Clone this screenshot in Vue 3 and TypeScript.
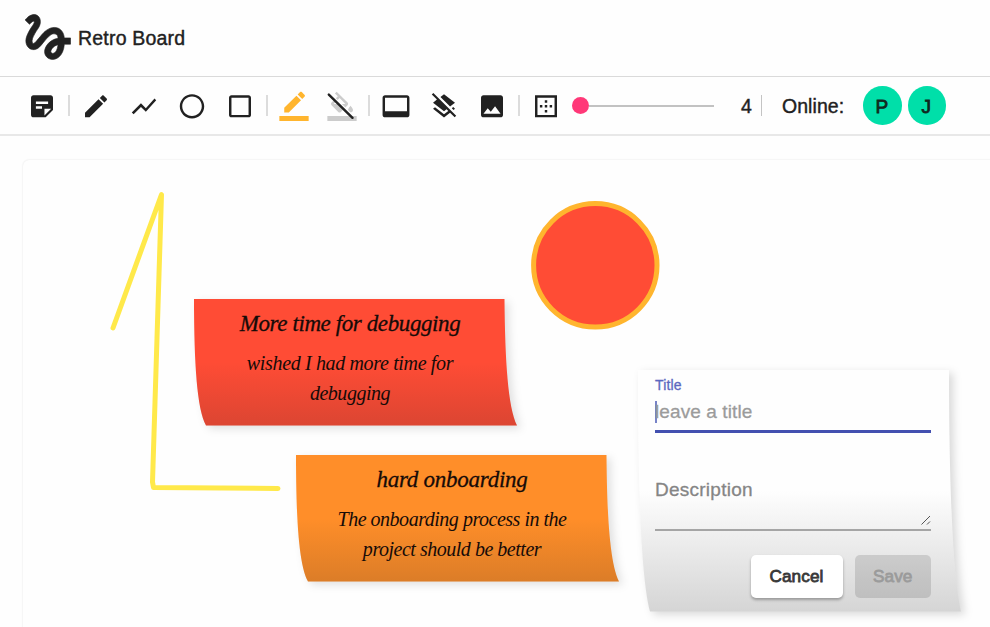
<script setup lang="ts">
import { ref } from 'vue'

interface Tool {
  name: string
  path: string
  kind?: 'stroke-color' | 'fill-color'
}

interface Note {
  id: string
  title: string
  lines: string[]
  color: string
}

const groups: Tool[][] = [
  [
    { name: 'Note', path: 'M19 3H4.99C3.89 3 3 3.9 3 5l.01 14c0 1.1.89 2 1.99 2h10l6-6V5c0-1.1-.9-2-2-2zM7 8h10v2H7V8zm5 6H7v-2h5v2zm2 5.5V14h5.5L14 19.5z' },
  ],
  [
    { name: 'Pencil', path: 'M3 17.25V21h3.75L17.81 9.94l-3.75-3.75L3 17.25zM20.71 7.04c.39-.39.39-1.02 0-1.41l-2.34-2.34c-.39-.39-1.02-.39-1.41 0l-1.83 1.83 3.75 3.75 1.83-1.83z' },
    { name: 'Line', path: 'M3.5 18.49l6-6.01 4 4L22 6.92l-1.41-1.41-7.09 7.97-4-4L2 16.99z' },
    { name: 'Circle', path: 'M12 2C6.48 2 2 6.48 2 12s4.48 10 10 10 10-4.48 10-10S17.52 2 12 2zm0 18c-4.42 0-8-3.58-8-8s3.58-8 8-8 8 3.58 8 8-3.58 8-8 8z' },
    { name: 'Rectangle', path: 'M19 5v14H5V5h14m0-2H5c-1.1 0-2 .9-2 2v14c0 1.1.9 2 2 2h14c1.1 0 2-.9 2-2V5c0-1.1-.9-2-2-2z' },
  ],
  [
    { name: 'Stroke color', kind: 'stroke-color', path: 'M17.75 7L14 3.25l-10 10V17h3.75l10-10zm2.96-2.96c.39-.39.39-1.02 0-1.41L18.37.29c-.39-.39-1.02-.39-1.41 0L15 2.25 18.75 6l1.96-1.96zM0 20h24v4H0z' },
    { name: 'Fill color', kind: 'fill-color', path: 'M16.56 8.94L7.62 0 6.21 1.41l2.38 2.38-5.15 5.15c-.59.59-.59 1.54 0 2.12l5.5 5.5c.29.29.68.44 1.06.44s.77-.15 1.06-.44l5.5-5.5c.59-.58.59-1.53 0-2.12zM5.21 10L10 5.21 14.79 10H5.21zM19 11.5s-2 2.17-2 3.5c0 1.1.9 2 2 2s2-.9 2-2c0-1.33-2-3.5-2-3.5zM0 20h24v4H0z' },
  ],
  [
    { name: 'Background', path: 'M21 3H3c-1.1 0-2 .9-2 2v14c0 1.1.9 2 2 2h18c1.1 0 2-.9 2-2V5c0-1.1-.9-2-2-2zm0 13H3V5h18v11z' },
    { name: 'Clear board', path: 'M19.81 14.99l1.19-.92-1.43-1.43-1.19.92 1.43 1.43zm-.45-4.72L21 9l-9-7-2.91 2.27 7.87 7.88 2.4-1.88zM3.27 1L2 2.27l4.22 4.22L3 9l1.63 1.27L12 16l2.1-1.63 1.43 1.43L12 18.54l-7.37-5.73L3 14.07l9 7 4.95-3.85L20.73 21 22 19.73 3.27 1z' },
    { name: 'Image', path: 'M21 19V5c0-1.1-.9-2-2-2H5c-1.1 0-2 .9-2 2v14c0 1.1.9 2 2 2h14c1.1 0 2-.9 2-2zM8.5 13.5l2.5 3.01L14.5 12l4.5 6H5l3.5-4.5z' },
  ],
  [
    { name: 'Line width', path: 'M13 7h-2v2h2V7zm0 4h-2v2h2v-2zm4 0h-2v2h2v-2zM3 3v18h18V3H3zm16 16H5V5h14v14zm-6-4h-2v2h2v-2zm-4-4H7v2h2v-2z' },
  ],
]

const notes: Note[] = [
  { id: 'debugging', title: 'More time for debugging', lines: ['wished I had more time for', 'debugging'], color: '#ff4c35' },
  { id: 'onboarding', title: 'hard onboarding', lines: ['The onboarding process in the', 'project should be better'], color: '#ff8e29' },
]

const users = ['P', 'J']
const lineWidth = ref(4)
const title = ref('')
const description = ref('')
</script>

<template>
  <div class="app">
    <header class="header">
      <svg class="logo" viewBox="0 0 24 24">
        <path d="M4.59 6.89c.7-.71 1.4-1.35 1.71-1.22.5.2 0 1.03-.3 1.52-.25.42-2.86 3.89-2.86 6.31 0 1.28.48 2.34 1.34 2.98.75.56 1.74.73 2.64.46 1.07-.31 1.95-1.4 3.06-2.77 1.21-1.49 2.83-3.44 4.08-3.44 1.63 0 1.65 1.01 1.76 1.79-3.78.64-5.38 3.67-5.38 5.37 0 1.7 1.44 3.09 3.21 3.09 1.63 0 4.29-1.33 4.69-6.1H21v-2.5h-2.47c-.15-1.65-1.09-4.2-4.03-4.2-2.25 0-4.18 1.91-4.94 2.84-.58.73-2.06 2.48-2.29 2.72-.25.3-.68.84-1.11.84-.45 0-.72-.83-.36-1.92.35-1.09 1.4-2.86 1.85-3.52.78-1.14 1.3-1.92 1.3-3.28C8.95 3.69 7.31 3 6.44 3 5.12 3 3.97 4 3.72 4.25c-.36.36-.66.66-.88.93l1.75 1.71zm9.29 11.66c-.31 0-.74-.26-.74-.72 0-.6.73-2.2 2.87-2.76-.3 2.69-1.43 3.48-2.13 3.48z" />
      </svg>
      <h1 class="brand">Retro Board</h1>
    </header>

    <nav class="toolbar">
      <template v-for="(group, index) in groups" :key="index">
        <span v-if="index > 0" class="divider"></span>
        <button v-for="tool in group" :key="tool.name" class="tool" :class="tool.kind">
          <svg class="icon" viewBox="-0.290 -0.560 24.570 24.570">
            <path :d="tool.path" />
            <template v-if="tool.kind === 'fill-color'">
              <path class="slash-gap" d="M2.2 1.6L18.800 17.600" />
              <path class="slash" d="M1.2 2.4L20.6 21.4" />
            </template>
          </svg>
        </button>
      </template>
      <div class="slider">
        <span class="thumb"></span>
        <span class="track"></span>
      </div>
      <span class="width-value">{{ lineWidth }}</span>
      <span class="divider end"></span>
      <span class="online">Online:</span>
      <div class="users">
        <span v-for="user in users" :key="user" class="avatar">{{ user }}</span>
      </div>
    </nav>

    <main class="workspace">
      <section class="canvas">
        <svg class="drawing" viewBox="23 160 967 467">
          <path class="freehand" d="M113 328L161.500 194.500L152.500 482L153.500 487.500L278 488.500" />
          <circle class="disc" cx="595.300" cy="265.300" r="61.700" />
        </svg>

        <article v-for="note in notes" :key="note.id" class="note" :class="note.id">
          <svg class="paper" viewBox="0 0 323 127" preserveAspectRatio="none">
            <defs>
              <linearGradient :id="'shade-' + note.id" x1="0" y1="0" x2="0" y2="1">
                <stop offset="0.500" stop-color="#222" stop-opacity="0" />
                <stop offset="1" stop-color="#222" stop-opacity="0.160" />
              </linearGradient>
            </defs>
            <path :fill="note.color" d="M0 0H310.500C311 62 314 108 323 126.500H12C3 110 0 65 0 0Z" />
            <path :fill="'url(#shade-' + note.id + ')'" d="M0 0H310.500C311 62 314 108 323 126.500H12C3 110 0 65 0 0Z" />
          </svg>
          <h2 class="note-title"><span>{{ note.title }}</span></h2>
          <p v-for="(line, n) in note.lines" :key="n" class="note-line" :class="'line-' + n"><span>{{ line }}</span></p>
        </article>

        <form class="editor" @submit.prevent>
          <svg class="paper" viewBox="0 0 324 242" preserveAspectRatio="none">
            <defs>
              <linearGradient id="shade-editor" x1="0" y1="0" x2="0" y2="1">
                <stop offset="0.500" stop-color="#fefefe" />
                <stop offset="1" stop-color="#d5d5d5" />
              </linearGradient>
            </defs>
            <path fill="url(#shade-editor)" d="M0 0H311C311 100 314 200 323 241.500H12C3 206 0 120 0 0Z" />
          </svg>
          <div class="fields">
            <label class="label">Title</label>
            <div class="title-field">
              <span class="caret"></span>
              <input v-model="title" class="input" placeholder="leave a title">
            </div>
            <div class="description-field">
              <textarea v-model="description" class="input area" placeholder="Description"></textarea>
              <svg class="grip" viewBox="0 0 10 10"><path d="M.5 9.500L9 1M6 9.500L9 6.500" /></svg>
            </div>
            <div class="actions">
              <button class="button cancel" type="button">Cancel</button>
              <button class="button save" type="button" disabled>Save</button>
            </div>
          </div>
        </form>
      </section>
    </main>
  </div>
</template>

<style>
body {
  margin: 0;
  overflow: hidden;
}
</style>

<style scoped>
* {
  box-sizing: border-box;
}

.app {
  width: 990px;
  height: 627px;
  display: flex;
  flex-direction: column;
  overflow: hidden;
  background: #fefefe;
  color: #212121;
  font-family: Helvetica, "Liberation Sans", sans-serif;
}

.header {
  height: 77px;
  display: flex;
  align-items: center;
  padding-left: 18px;
  border-bottom: 1px solid #dadada;
}

.logo {
  width: 60px;
  height: 60px;
  flex: none;
  margin-top: -2px;
  fill: #212121;
  stroke: #212121;
  stroke-width: 0.250;
}

.brand {
  margin: 0;
  font-size: 19.500px;
  line-height: 24px;
  font-weight: 400;
  letter-spacing: 0.200px;
  -webkit-text-stroke: 0.400px #212121;
}

.toolbar {
  height: 59px;
  display: flex;
  align-items: center;
  padding-left: 18px;
  border-bottom: 2px solid #e8e8e8;
}

.tool {
  width: 48px;
  height: 49px;
  padding: 10px 0 0 0;
  flex: none;
  display: flex;
  align-items: flex-start;
  justify-content: center;
  border: 0;
  background: none;
}

.icon {
  width: 30px;
  height: 30px;
  fill: #212121;
  overflow: visible;
}

.stroke-color .icon {
  fill: #ffb52e;
}

.fill-color .icon {
  fill: #ccc;
}

.slash,
.slash-gap {
  fill: none;
}

.slash {
  stroke: #212121;
  stroke-width: 2;
  stroke-linecap: round;
}

.slash-gap {
  stroke: #fefefe;
  stroke-width: 1.200;
}

.divider {
  width: 2px;
  height: 21px;
  margin: 0 2px;
  flex: none;
  background: #dcdcdc;
}

.slider {
  width: 142px;
  display: flex;
  align-items: center;
  margin-left: 2px;
}

.thumb {
  width: 17px;
  height: 17px;
  border-radius: 50%;
  background: #ff3878;
}

.track {
  width: 125px;
  height: 2px;
  background: #c2c2c2;
}

.width-value {
  width: 12px;
  margin: 2px 0 0 27px;
  font-size: 19.500px;
  -webkit-text-stroke: 0.400px #212121;
}

.divider.end {
  margin: 0 20px 0 8px;
  width: 1px;
  background: #c4c4c4;
}

.online {
  width: 81px;
  margin-top: 2px;
  font-size: 19.500px;
  letter-spacing: 0.050px;
  -webkit-text-stroke: 0.400px #212121;
}

.users {
  display: flex;
  gap: 6px;
}

.avatar {
  width: 38.500px;
  height: 38.500px;
  display: flex;
  align-items: center;
  justify-content: center;
  padding: 2px 1px 0 0;
  border-radius: 50%;
  background: #00dfa9;
  font-size: 19px;
  color: #10281f;
  -webkit-text-stroke: 0.800px #10281f;
}

.workspace {
  flex: 1;
  padding: 24px 0 0 23px;
  overflow: hidden;
}

.canvas {
  position: relative;
  width: 1000px;
  height: 500px;
  border-radius: 6px;
  background: #fefefe;
  box-shadow: 0 0 2px rgba(0, 0, 0, 0.130);
}

.drawing {
  position: absolute;
  left: 0;
  top: 0;
  width: 967px;
  height: 467px;
}

.freehand {
  fill: none;
  stroke: #ffe94a;
  stroke-width: 5;
  stroke-linecap: round;
  stroke-linejoin: round;
}

.disc {
  fill: #ff4c35;
  stroke: #ffb52e;
  stroke-width: 5;
}

.note {
  position: absolute;
  width: 323px;
  height: 127px;
  padding: 10px 11px 0 0;
  text-align: center;
  color: #160b08;
  font-family: "Apple Chancery", "Liberation Serif", serif;
  font-style: italic;
}

.debugging {
  left: 171px;
  top: 139px;
}

.onboarding {
  left: 273px;
  top: 295px;
}

.paper {
  position: absolute;
  left: 0;
  top: 0;
  width: 100%;
  height: 100%;
  overflow: visible;
  filter: drop-shadow(4px 3px 4px rgba(0, 0, 0, 0.120));
}

.note-title,
.note-line {
  position: relative;
  margin: 0;
  font-weight: 400;
  line-height: 30px;
  white-space: nowrap;
}

.note-title {
  margin-bottom: 9px;
  font-size: 23px;
  letter-spacing: -0.400px;
  -webkit-text-stroke: 0.300px #160b08;
}

.onboarding .note-title {
  letter-spacing: -0.250px;
}

.note-line {
  font-size: 20px;
  letter-spacing: -0.480px;
}

.debugging .line-0 {
  letter-spacing: -0.350px;
}

.editor {
  position: absolute;
  left: 614px;
  top: 210px;
  width: 324px;
  height: 242px;
}

.editor .paper {
  left: 1px;
  filter: drop-shadow(4px 3px 4px rgba(0, 0, 0, 0.150));
}

.fields {
  position: relative;
  display: flex;
  flex-direction: column;
  width: 276px;
  margin-left: 18px;
  padding-top: 6px;
}

.label {
  height: 18px;
  font-size: 14px;
  line-height: 18px;
  color: #5b68c0;
  letter-spacing: 0.150px;
  -webkit-text-stroke: 0.300px #5b68c0;
}

.title-field {
  height: 39px;
  display: flex;
  align-items: center;
  padding-bottom: 1px;
  border-bottom: 3px solid #4350b0;
}

.caret {
  width: 2px;
  height: 22px;
  flex: none;
  margin-right: -2px;
  background: #7783c8;
}

.input {
  width: 100%;
  min-width: 0;
  padding: 0;
  border: 0;
  outline: 0;
  background: none;
  color: #212121;
  font-family: inherit;
  font-size: 19px;
  letter-spacing: 0.100px;
}

.input::placeholder {
  color: #9b9b9b;
  -webkit-text-stroke: 0.300px #9b9b9b;
}

.description-field {
  position: relative;
  height: 53px;
  margin-top: 45px;
  border-bottom: 2px solid #a5a5a5;
}

.area {
  display: block;
  height: 46px;
  line-height: 24px;
  letter-spacing: 0.250px;
  resize: none;
  overflow: hidden;
}

.area::placeholder {
  color: #858585;
  -webkit-text-stroke: 0.300px #858585;
}

.grip {
  position: absolute;
  right: 0;
  bottom: 4px;
  width: 10px;
  height: 10px;
  fill: none;
  stroke: #555;
}

.actions {
  display: flex;
  justify-content: flex-end;
  gap: 12px;
  margin-top: 24px;
}

.button {
  height: 43px;
  padding: 0;
  border: 0;
  border-radius: 5px;
  font-family: inherit;
  font-size: 17.200px;
  letter-spacing: 0.100px;
  -webkit-text-stroke: 0.800px currentColor;
}

.cancel {
  width: 92px;
  background: #fff;
  color: #383838;
  box-shadow: 0 2px 3px rgba(0, 0, 0, 0.300);
}

.save {
  width: 76.500px;
  background: rgba(0, 0, 0, 0.120);
  color: #9b9b9b;
}
</style>
